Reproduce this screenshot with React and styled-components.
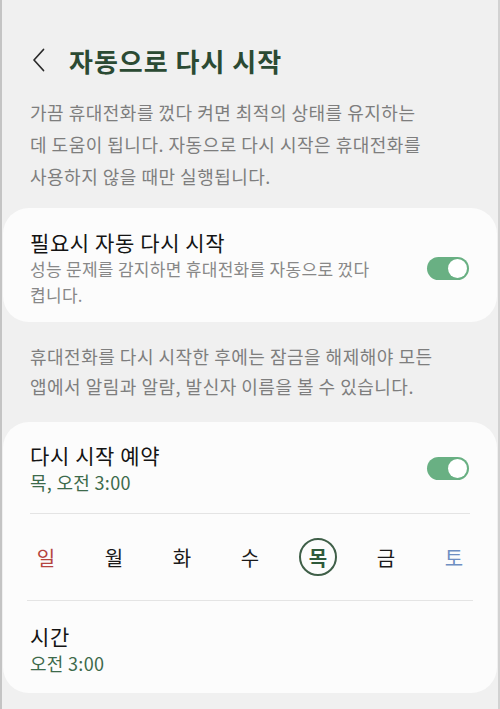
import React from "react"
import styled, { createGlobalStyle } from "styled-components"

const GlobalStyle = createGlobalStyle`
  html, body {
    margin: 0;
    padding: 0;
    background: #f0f0f0;
  }
  body {
    font-family: "Noto Sans CJK KR", "Noto Sans", sans-serif;
  }
`

const Page = styled.div`
  width: 500px;
  height: 709px;
  box-sizing: border-box;
  background: #f0f0f0;
  border-left: 2px solid #c4c4c4;
  border-right: 2px solid #d2d2d2;
  padding: 0 1px;
  overflow: hidden;
`

const Header = styled.header`
  display: flex;
  align-items: center;
  height: 40px;
  margin-top: 40px;
  padding-left: 29px;
`

const BackButton = styled.button`
  border: none;
  background: none;
  padding: 0;
  width: 14px;
  height: 24px;
  margin-right: 23px;
  display: flex;
  align-items: center;
  cursor: pointer;
`

const Title = styled.h1`
  margin: 0;
  font-size: 26px;
  font-weight: 700;
  color: #2b4a33;
  letter-spacing: 1px;
`

const Note = styled.p`
  margin: ${p => p.$margin || "0"};
  padding: 0 27px;
  font-size: 18px;
  line-height: ${p => p.$lineHeight || "32px"};
  letter-spacing: 0.5px;
  white-space: nowrap;
  color: #7e7e7e;
`

const Card = styled.section`
  background: #fcfcfc;
  border-radius: 26px;
  padding: ${p => p.$padding || "0 27px"};
`

const Row = styled.div`
  display: flex;
  align-items: center;
  justify-content: space-between;
  padding: ${p => p.$padding || "0"};
  border-bottom: ${p => (p.$divider ? "1.5px solid #e4e4e4" : "none")};
`

const Texts = styled.div`
  display: flex;
  flex-direction: column;
  white-space: nowrap;
`

const ItemTitle = styled.div`
  font-size: 21px;
  line-height: 28px;
  letter-spacing: 0.6px;
  color: #141414;
`

const ItemSub = styled.div`
  font-size: ${p => (p.$accent ? "18px" : "17px")};
  line-height: 26px;
  letter-spacing: 0.3px;
  color: ${p => (p.$accent ? "#3d6a4b" : "#888888")};
`

const Toggle = styled.div`
  position: relative;
  flex: none;
  width: 42px;
  height: 23px;
  border-radius: 12px;
  background: #69b083;
  margin-right: 1px;
  &::after {
    content: "";
    position: absolute;
    right: 2px;
    top: 2px;
    width: 19px;
    height: 19px;
    border-radius: 50%;
    background: #ffffff;
  }
`

const Days = styled.div`
  display: flex;
  justify-content: space-between;
  align-items: center;
  height: 86px;
  margin: 0 -3px;
  border-bottom: 1.5px solid #e4e4e4;
`

const Day = styled.div`
  width: 38px;
  height: 38px;
  box-sizing: border-box;
  border-radius: 50%;
  border: ${p => (p.$selected ? "2px solid #3f5f48" : "2px solid transparent")};
  display: flex;
  align-items: center;
  justify-content: center;
  font-size: 20px;
  font-weight: ${p => (p.$selected ? 700 : 400)};
  color: ${p => p.$color || "#1a1a1a"};
`

const days = [
  { label: "일", color: "#b5443f" },
  { label: "월" },
  { label: "화" },
  { label: "수" },
  { label: "목", color: "#2f5a3b", selected: true },
  { label: "금" },
  { label: "토", color: "#6f8fc2" },
]

const App = () => (
  <>
    <GlobalStyle />
    <Page>
      <Header>
        <BackButton aria-label="뒤로">
          <svg width="13" height="24" viewBox="0 0 13 24">
            <path
              d="M11.5 1.5 L2 12 L11.5 22.5"
              fill="none"
              stroke="#2a2a2a"
              strokeWidth="1.7"
              strokeLinecap="round"
              strokeLinejoin="round"
            />
          </svg>
        </BackButton>
        <Title>자동으로 다시 시작</Title>
      </Header>

      <Note $margin="16px 0 16px">
        가끔 휴대전화를 껐다 켜면 최적의 상태를 유지하는
        <br />
        데 도움이 됩니다. 자동으로 다시 시작은 휴대전화를
        <br />
        사용하지 않을 때만 실행됩니다.
      </Note>

      <Card $padding="20px 27px 14px">
        <Row>
          <Texts>
            <ItemTitle>필요시 자동 다시 시작</ItemTitle>
            <ItemSub>
              성능 문제를 감지하면 휴대전화를 자동으로 껐다
              <br />
              켭니다.
            </ItemSub>
          </Texts>
          <Toggle />
        </Row>
      </Card>

      <Note $margin="19px 0 21px" $lineHeight="30px">
        휴대전화를 다시 시작한 후에는 잠금을 해제해야 모든
        <br />
        앱에서 알림과 알람, 발신자 이름을 볼 수 있습니다.
      </Note>

      <Card $padding="0 27px">
        <Row $divider $padding="19px 0 18px">
          <Texts>
            <ItemTitle>다시 시작 예약</ItemTitle>
            <ItemSub $accent>목, 오전 3:00</ItemSub>
          </Texts>
          <Toggle />
        </Row>
        <Days>
          {days.map(d => (
            <Day key={d.label} $color={d.color} $selected={d.selected}>
              {d.label}
            </Day>
          ))}
        </Days>
        <Row $padding="21px 0 17px">
          <Texts>
            <ItemTitle>시간</ItemTitle>
            <ItemSub $accent>오전 3:00</ItemSub>
          </Texts>
        </Row>
      </Card>
    </Page>
  </>
)

export default App
